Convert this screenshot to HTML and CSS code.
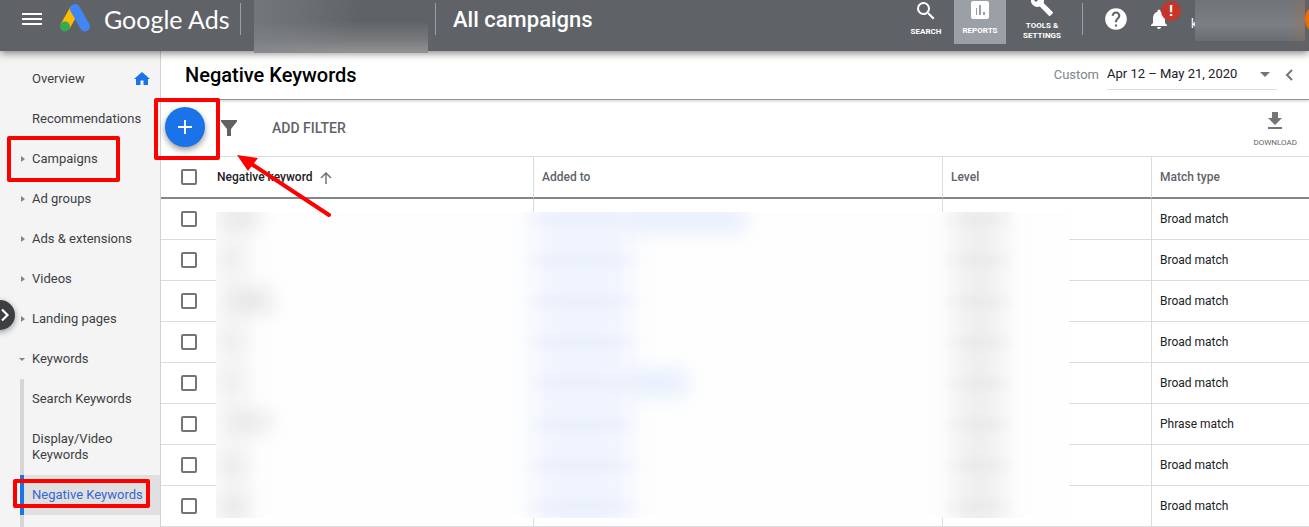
FILE: index.html
```html
<!DOCTYPE html>
<html lang="en">
<head>
    <meta charset="UTF-8">
    <title>Negative Keywords - Google Ads</title>
    <link rel="stylesheet" href="styles.css">
</head>
<body>
    <header class="topbar">
        <button class="icon-button menu" aria-label="Main menu">
            <svg width="20" height="12" viewBox="0 0 20 12"><path d="M0 0h20v2H0zM0 5h20v2H0zM0 10h20v2H0z" fill="#fff"/></svg>
        </button>
        <a class="brand" href="#">
            <svg width="30" height="28" viewBox="0 0 30 28">
                <path d="M5 22.500L15 5" stroke="#fbbc04" stroke-width="10"/>
                <path d="M15 5L25 22.500" stroke="#4285f4" stroke-width="10" stroke-linecap="round"/>
                <circle cx="5" cy="22.500" r="5" fill="#34a853"/>
            </svg>
            <span class="brand-name">Google Ads</span>
        </a>
        <span class="divider"></span>
        <span class="account-mask"></span>
        <span class="divider"></span>
        <span class="scope">All campaigns</span>

        <div class="tools">
            <button class="tool">
                <svg width="24" height="24" viewBox="0 0 24 24" fill="#fff"><path d="M15.500 14h-.79l-.28-.27A6.470 6.470 0 0 0 16 9.500 6.500 6.500 0 1 0 9.500 16c1.610 0 3.090-.59 4.230-1.570l.27.28v.79l5 4.990L20.490 19l-4.990-5zm-6 0C7.010 14 5 11.990 5 9.500S7.010 5 9.500 5 14 7.010 14 9.500 11.990 14 9.500 14z"/></svg>
                <span>SEARCH</span>
            </button>
            <button class="tool tool-active">
                <svg width="24" height="24" viewBox="0 0 24 24" fill="#fff"><path d="M19 3H5a2 2 0 0 0-2 2v14a2 2 0 0 0 2 2h14a2 2 0 0 0 2-2V5a2 2 0 0 0-2-2zM9 17H8v-7h1v7zm4 0h-2V7h2v10zm4 0h-2v-3h2v3z"/></svg>
                <span>REPORTS</span>
            </button>
            <button class="tool tool-settings">
                <svg width="24" height="24" viewBox="0 0 24 24" fill="#fff"><path d="M22.700 19l-9.100-9.100c.9-2.300.4-5-1.500-6.900-2-2-5-2.400-7.400-1.300L9 6 6 9 1.600 4.700C.4 7.100.9 10.100 2.900 12.100c1.900 1.900 4.600 2.400 6.900 1.500l9.100 9.100c.4.4 1 .4 1.400 0l2.300-2.300c.5-.4.5-1.100.1-1.400z"/></svg>
                <span>TOOLS &amp;<br>SETTINGS</span>
            </button>
        </div>
        <span class="divider"></span>
        <button class="icon-button help" aria-label="Help">
            <svg width="26" height="26" viewBox="0 0 24 24" fill="#fff"><path d="M12 2C6.480 2 2 6.480 2 12s4.480 10 10 10 10-4.480 10-10S17.520 2 12 2zm1 17h-2v-2h2v2zm2.070-7.750l-.9.920C13.450 12.900 13 13.500 13 15h-2v-.5c0-1.100.45-2.100 1.170-2.830l1.240-1.260c.37-.36.59-.86.59-1.410a2 2 0 0 0-4 0H8a4 4 0 0 1 8 0c0 .88-.36 1.680-.93 2.250z"/></svg>
        </button>
        <button class="icon-button bell" aria-label="Notifications">
            <svg width="24" height="24" viewBox="0 0 24 24" fill="#fff"><path d="M12 22c1.100 0 2-.9 2-2h-4a2 2 0 0 0 2 2zm6-6v-5c0-3.070-1.640-5.640-4.500-6.320V4a1.500 1.500 0 0 0-3 0v.68C7.630 5.360 6 7.920 6 11v5l-2 2v1h16v-1l-2-2z"/></svg>
            <span class="badge">!</span>
        </button>
        <span class="user-initial">k</span>
        <span class="user-mask"></span>
        <span class="avatar"></span>
    </header>

    <div class="layout">
        <nav class="sidebar">
            <ul class="nav-list">
                <li><a href="#">Overview</a>
                    <svg class="home" width="16" height="14" viewBox="0 0 16 14"><path d="M8 0l8 7h-2v6H9.500V8.500h-3V13H2V7H0z" fill="#1a73e8"/></svg>
                </li>
                <li><a href="#">Recommendations</a></li>
                <li class="closed"><a href="#">Campaigns</a></li>
                <li class="closed"><a href="#">Ad groups</a></li>
                <li class="closed"><a href="#">Ads &amp; extensions</a></li>
                <li class="closed"><a href="#">Videos</a></li>
                <li class="closed"><a href="#">Landing pages</a></li>
                <li class="open"><a href="#">Keywords</a></li>
            </ul>
            <ul class="sub-list">
                <li><a href="#">Search Keywords</a></li>
                <li><a href="#">Display/Video Keywords</a></li>
                <li class="active"><a href="#">Negative Keywords</a></li>
            </ul>
            <button class="expand" aria-label="Expand navigation">
                <svg width="8" height="14" viewBox="0 0 8 14"><path d="M1 1.500L6.500 7 1 12.500" fill="none" stroke="#fff" stroke-width="2.200"/></svg>
            </button>
            <span class="mark mark-campaigns"></span>
            <span class="mark mark-negative"></span>
        </nav>

        <main class="content">
            <div class="title-row">
                <h1>Negative Keywords</h1>
                <label for="range">Custom</label>
                <div class="range-box">
                    <select id="range"><option>Apr 12 – May 21, 2020</option></select>
                    <svg width="10" height="5" viewBox="0 0 10 5"><path d="M0 0h10L5 5z" fill="#757575"/></svg>
                </div>
                <button class="icon-button" aria-label="Previous period">
                    <svg width="8" height="12" viewBox="0 0 8 12"><path d="M7 1L2 6l5 5" fill="none" stroke="#757575" stroke-width="2"/></svg>
                </button>
            </div>

            <div class="toolbar">
                <button class="add" aria-label="Add negative keywords">
                    <svg width="14" height="14" viewBox="0 0 14 14"><path d="M6 0h2v6h6v2H8v6H6V8H0V6h6z" fill="#fff"/></svg>
                </button>
                <svg class="funnel" width="16" height="16" viewBox="0 0 16 16"><path d="M0 0h16v1.500L10 9v7H6V9L0 1.500z" fill="#616161"/></svg>
                <button class="add-filter">ADD FILTER</button>
                <button class="download">
                    <svg width="14" height="18" viewBox="0 0 14 18"><path d="M4 0h6v6h4l-7 7-7-7h4zM0 15h14v2H0z" fill="#757575"/></svg>
                    <span>DOWNLOAD</span>
                </button>
                <span class="mark mark-add"></span>
            </div>

            <div class="table-wrap">
                <table>
                    <thead>
                        <tr>
                            <th class="col-check"><input type="checkbox" aria-label="Select all"></th>
                            <th class="col-keyword">Negative keyword
                                <svg width="12" height="12" viewBox="0 0 12 12"><path d="M6 12V1M1 6l5-5 5 5" fill="none" stroke="#757575" stroke-width="1.500"/></svg>
                            </th>
                            <th class="col-added">Added to</th>
                            <th class="col-level">Level</th>
                            <th>Match type</th>
                        </tr>
                    </thead>
                    <tbody>
                        <tr><td><input type="checkbox" aria-label="Select row"></td><td></td><td></td><td></td><td>Broad match</td></tr>
                        <tr><td><input type="checkbox" aria-label="Select row"></td><td></td><td></td><td></td><td>Broad match</td></tr>
                        <tr><td><input type="checkbox" aria-label="Select row"></td><td></td><td></td><td></td><td>Broad match</td></tr>
                        <tr><td><input type="checkbox" aria-label="Select row"></td><td></td><td></td><td></td><td>Broad match</td></tr>
                        <tr><td><input type="checkbox" aria-label="Select row"></td><td></td><td></td><td></td><td>Broad match</td></tr>
                        <tr><td><input type="checkbox" aria-label="Select row"></td><td></td><td></td><td></td><td>Phrase match</td></tr>
                        <tr><td><input type="checkbox" aria-label="Select row"></td><td></td><td></td><td></td><td>Broad match</td></tr>
                        <tr><td><input type="checkbox" aria-label="Select row"></td><td></td><td></td><td></td><td>Broad match</td></tr>
                    </tbody>
                </table>

                <!-- blurred client data -->
                <svg class="data-mask" width="853" height="306" viewBox="0 0 853 306">
                    <defs>
                        <filter id="soft" x="-100%" y="-150%" width="300%" height="400%" color-interpolation-filters="sRGB"><feGaussianBlur stdDeviation="10"/></filter>
                        <filter id="wide" x="-50%" y="-10%" width="200%" height="120%" color-interpolation-filters="sRGB"><feGaussianBlur stdDeviation="12 4"/></filter>
                    </defs>
                    <rect width="853" height="306" fill="#fefefe"/>
                    <g filter="url(#wide)">
                        <rect x="4" y="-10" width="26" height="330" fill="#f4f4f4"/>
                        <rect x="318" y="-10" width="96" height="330" fill="#f0f4fe"/>
                        <rect x="738" y="-10" width="50" height="330" fill="#efefef"/>
                    </g>
                    <g filter="url(#soft)" fill="#e4e4e4">
                        <rect x="8" y="-4" width="34" height="20"/>
                        <rect x="6" y="40" width="18" height="14"/>
                        <rect x="12" y="78" width="44" height="22"/>
                        <rect x="6" y="122" width="18" height="14"/>
                        <rect x="6" y="163" width="18" height="14"/>
                        <rect x="12" y="201" width="42" height="18"/>
                        <rect x="6" y="245" width="20" height="18"/>
                        <rect x="6" y="284" width="24" height="20"/>
                    </g>
                    <g filter="url(#soft)" fill="#e6eefc">
                        <rect x="410" y="-6" width="120" height="26"/>
                        <rect x="410" y="158" width="62" height="26"/>
                    </g>
                    <g filter="url(#wide)" fill="#e8edfa">
                        <rect x="322" y="4" width="88" height="7"/>
                        <rect x="322" y="45" width="88" height="7"/>
                        <rect x="322" y="86" width="88" height="7"/>
                        <rect x="322" y="127" width="88" height="7"/>
                        <rect x="322" y="168" width="88" height="7"/>
                        <rect x="322" y="209" width="88" height="7"/>
                        <rect x="322" y="250" width="88" height="7"/>
                        <rect x="322" y="291" width="88" height="7"/>
                    </g>
                    <g filter="url(#wide)" fill="#e6e6e6">
                        <rect x="744" y="4" width="38" height="7"/>
                        <rect x="744" y="45" width="38" height="7"/>
                        <rect x="744" y="86" width="38" height="7"/>
                        <rect x="744" y="127" width="38" height="7"/>
                        <rect x="744" y="168" width="38" height="7"/>
                        <rect x="744" y="209" width="38" height="7"/>
                        <rect x="744" y="250" width="38" height="7"/>
                        <rect x="744" y="291" width="38" height="7"/>
                    </g>
                </svg>

                <svg class="arrow" width="96" height="64" viewBox="0 0 96 64">
                    <path d="M92 60L16 10" stroke="#f00" stroke-width="4" stroke-linecap="round"/>
                    <path d="M0 0l21 3-10 13z" fill="#f00"/>
                </svg>
            </div>
        </main>
    </div>
</body>
</html>
```
FILE: styles.css
```css
/* styles.css */
* {
    box-sizing: border-box;
}
body {
    font-family: Roboto, "Liberation Sans", sans-serif;
    font-size: 13px;
    color: #3c4043;
    background-color: white;
    margin: 0;
    min-height: 100vh;
    display: flex;
    flex-direction: column;
    overflow-x: hidden;
}
button {
    background: none;
    border: none;
    padding: 0;
    margin: 0;
    font-family: inherit;
    cursor: pointer;
}
svg {
    display: block;
    flex: none;
}
a {
    color: inherit;
    text-decoration: none;
}
ul {
    list-style: none;
    margin: 0;
    padding: 0;
}

/* top bar */
.topbar {
    position: relative;
    z-index: 2;
    height: 51px;
    padding: 0 0 13px 22px;
    display: flex;
    align-items: center;
    color: white;
    background-color: #5f6368;
    box-shadow: 0 2px 8px rgba(0,0,0,0.5);
}
.icon-button {
    display: flex;
    align-items: center;
    justify-content: center;
}
.brand {
    display: flex;
    align-items: center;
    gap: 14px;
    width: 180px;
    margin-left: 18px;
}
.brand svg {
    margin-bottom: 2px;
}
.brand-name {
    font-family: Lato, sans-serif;
    font-size: 25px;
    line-height: 32px;
    white-space: nowrap;
}
.divider {
    width: 1px;
    height: 32px;
    flex: none;
    background-color: #9aa0a6;
}
.account-mask {
    width: 174px;
    height: 53px;
    align-self: flex-start;
    margin: 0 7px -15px 13px;
    background: linear-gradient(100deg, rgba(128,132,136,0.6) 0%, rgba(128,132,136,0.4) 25%, rgba(95,99,104,0) 60%), linear-gradient(#5f6368 40%, #77797c 75%, #939495);
}
.scope {
    margin-left: 17px;
    padding-top: 2px;
    font-size: 22px;
    font-weight: 500;
    line-height: 32px;
}
.tools {
    display: flex;
    align-self: flex-start;
    margin-left: auto;
}
.tool {
    width: 56px;
    height: 44px;
    display: flex;
    flex-direction: column;
    align-items: center;
    color: white;
    font-size: 8px;
    font-weight: 700;
    line-height: 10px;
    gap: 4px;
}
.tool-active {
    width: 52px;
    background-color: #9aa0a6;
}
.tool svg {
    margin-top: -1px;
}
.tool-active svg {
    margin-top: -2px;
}
.tool-settings {
    width: 72px;
    margin-right: 4px;
}
.tool-settings svg {
    margin-top: -7px;
}
.help {
    margin-left: 20px;
}
.bell {
    position: relative;
    margin-left: 18px;
}
.badge {
    position: absolute;
    left: 14px;
    top: -6px;
    width: 20px;
    height: 20px;
    border-radius: 50%;
    background-color: #c5352b;
    color: white;
    font-size: 15px;
    font-weight: 700;
    line-height: 20px;
    text-align: center;
}
.user-initial {
    width: 8px;
    margin-left: 20px;
    padding-top: 10px;
    font-size: 12px;
}
.user-mask {
    width: 110px;
    height: 41px;
    align-self: flex-start;
    margin: 0 0 -3px -4px;
    background: linear-gradient(90deg, rgba(118,122,127,0) 85%, rgba(160,110,80,0.4)), linear-gradient(#6f7378, #7c8085 60%, #6a6e73);
}
.avatar {
    width: 32px;
    height: 32px;
    margin-right: -28px;
    border-radius: 50%;
    background-color: #ef6c00;
}

/* side navigation */
.layout {
    flex: 1;
    display: flex;
}
.sidebar {
    position: relative;
    width: 161px;
    flex: none;
    display: flex;
    flex-direction: column;
    padding-top: 8px;
    background-color: #f4f4f4;
    border-right: 1px solid #d0d1d3;
}
.sidebar li {
    display: flex;
    align-items: center;
    min-height: 40px;
    line-height: 16px;
}
.nav-list li {
    padding: 0 10px 0 32px;
}
.nav-list a {
    white-space: nowrap;
}
.home {
    margin-left: auto;
}
.closed::before {
    content: "";
    margin: 0 7px 0 -11px;
    border: 3px solid transparent;
    border-left: 4px solid #80868b;
    border-right-width: 0;
}
.open::before {
    content: "";
    margin: 0 7px 0 -13px;
    border: 3px solid transparent;
    border-bottom-width: 0;
    border-top-color: #80868b;
}
.sub-list {
    flex: 1;
    margin-left: 20px;
    background: linear-gradient(#d6d6d6, #d6d6d6) left / 4px 100% no-repeat;
}
.sub-list li {
    padding: 0 16px 0 8px;
    border-left: 4px solid transparent;
}
.sub-list li:nth-child(2) {
    padding: 12px 32px 12px 8px;
}
.sub-list .active {
    color: #3367d6;
    background-color: #e0e0e0;
    border-left-color: #1a73e8;
    white-space: nowrap;
}
.expand {
    position: absolute;
    left: -15px;
    top: 249px;
    width: 30px;
    height: 30px;
    padding-left: 16px;
    border-radius: 50%;
    background-color: #3c4043;
    box-shadow: 0 2px 6px rgba(0,0,0,0.4);
}

/* red call-outs */
.mark {
    position: absolute;
    border: 4px solid #f00;
    border-radius: 2px;
    pointer-events: none;
}
.mark-campaigns {
    left: 7px;
    top: 85px;
    width: 113px;
    height: 46px;
}
.mark-negative {
    left: 13px;
    top: 428px;
    width: 137px;
    height: 29px;
}
.mark-add {
    left: -7px;
    top: -2px;
    width: 66px;
    height: 62px;
}
.arrow {
    position: absolute;
    left: 76px;
    top: -2px;
    pointer-events: none;
}

/* content */
.content {
    flex: 1;
    min-width: 0;
}
.title-row {
    height: 49px;
    padding: 0 16px 0 24px;
    display: flex;
    align-items: center;
    border-bottom: 1px solid #909294;
    box-shadow: 0 1px 3px rgba(0,0,0,0.2);
}
h1 {
    margin: 0 auto 0 0;
    font-size: 20px;
    font-weight: 500;
    line-height: 24px;
    color: black;
}
.title-row label {
    color: #80868b;
    padding-bottom: 2px;
}
.range-box {
    width: 170px;
    height: 30px;
    margin: 0 8px;
    padding-right: 7px;
    display: flex;
    align-items: center;
    border-bottom: 1px solid #dadce0;
}
.range-box select {
    flex: 1;
    height: 28px;
    margin-bottom: 2px;
    padding: 0;
    border: none;
    appearance: none;
    background: none;
    font-family: inherit;
    font-size: 13px;
    color: #202124;
}
.toolbar {
    position: relative;
    height: 57px;
    padding: 0 12px 0 4px;
    display: flex;
    align-items: center;
    border-bottom: 1px solid #dadce0;
}
.add {
    width: 40px;
    height: 40px;
    margin-bottom: 2px;
    display: flex;
    align-items: center;
    justify-content: center;
    border-radius: 50%;
    background-color: #1a73e8;
    box-shadow: 0 3px 6px rgba(0,0,0,0.4);
}
.funnel {
    margin-left: 16px;
}
.add-filter {
    margin-left: 35px;
    font-size: 14px;
    font-weight: 500;
    color: #5f6368;
}
.download {
    margin-left: auto;
    padding-top: 3px;
    display: flex;
    flex-direction: column;
    align-items: center;
    gap: 8px;
    font-size: 8px;
    line-height: 10px;
    color: #5f6368;
}

/* keyword table */
.table-wrap {
    position: relative;
}
table {
    width: 100%;
    table-layout: fixed;
    border-collapse: separate;
    border-spacing: 0;
    font-size: 12px;
    color: #202124;
}
th, td {
    height: 41px;
    padding: 0 8px;
    text-align: left;
    border-bottom: 1px solid #dadce0;
    border-left: 1px solid #dadce0;
}
th {
    height: 42px;
    font-weight: 500;
    color: #5f6368;
    border-bottom: 2px solid #80868b;
}
th:nth-child(-n+2), td:nth-child(-n+2) {
    border-left: none;
}
.col-check {
    width: 48px;
}
.col-keyword {
    width: 324px;
    color: #202124;
}
.col-keyword svg {
    display: inline-block;
    vertical-align: -3px;
    margin-left: 4px;
}
.col-added {
    width: 409px;
}
.col-level {
    width: 209px;
}
input[type="checkbox"] {
    appearance: none;
    display: block;
    width: 16px;
    height: 16px;
    margin: 0 0 0 12px;
    border: 2px solid #757575;
    border-radius: 2px;
    background-color: white;
}
.data-mask {
    position: absolute;
    left: 55px;
    top: 55px;
}
```
